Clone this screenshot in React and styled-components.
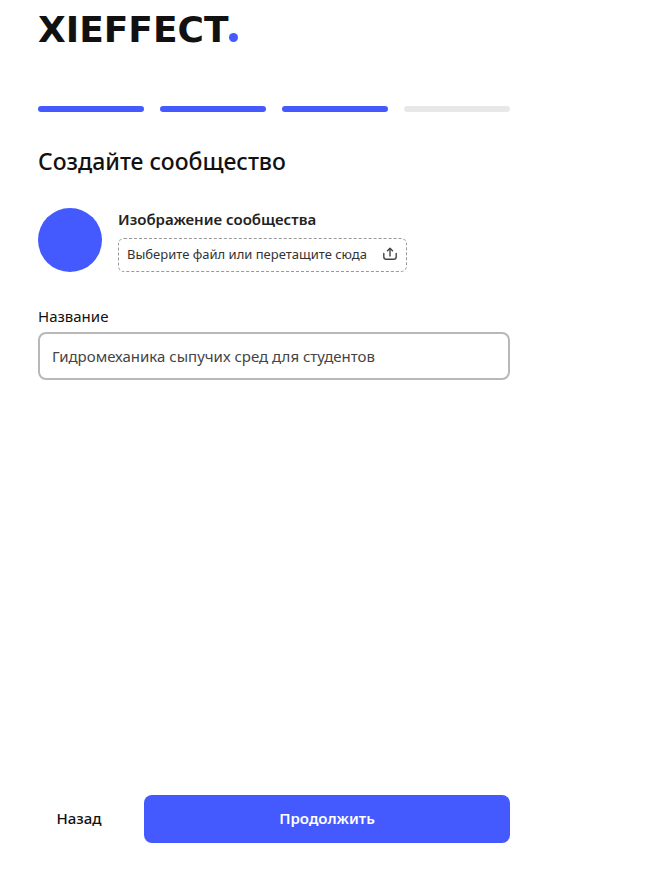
import React, { useState } from "react";
import styled, { createGlobalStyle } from "styled-components";

const GlobalStyle = createGlobalStyle`
  *, *::before, *::after { box-sizing: border-box; }
  body {
    margin: 0;
    background: #ffffff;
    color: #111111;
    font-family: "Noto Sans", "Open Sans", sans-serif;
    font-size: 15px;
    line-height: 20px;
  }
  button, input { font: inherit; color: inherit; }
`;

const Page = styled.main`
  display: flex;
  flex-direction: column;
  width: 100%;
  max-width: 548px;
  min-height: 100vh;
  padding: 14px 38px 37px;
`;

const Logo = styled.div`
  display: flex;
  align-items: baseline;
  height: 32px;
  font-family: "DejaVu Sans", sans-serif;
  font-size: 36px;
  font-weight: 700;
  line-height: 32px;
`;

const LogoDot = styled.span`
  width: 9px;
  height: 9px;
  border-radius: 50%;
  background: #445aff;
`;

const Steps = styled.div`
  display: flex;
  gap: 16px;
  margin-top: 60px;
`;

const Step = styled.span`
  flex: 1;
  height: 6px;
  border-radius: 3px;
  background: ${({ $done }) => ($done ? "#445aff" : "#e8e8e8")};
`;

const Form = styled.form`
  display: flex;
  flex: 1;
  flex-direction: column;
  margin-top: 33px;
`;

const Title = styled.h1`
  margin: 0;
  font-size: 23px;
  font-weight: 500;
  line-height: 32px;
`;

const ImageRow = styled.div`
  display: flex;
  align-items: center;
  gap: 16px;
  margin-top: 31px;
`;

const Avatar = styled.div`
  flex: none;
  width: 64px;
  height: 64px;
  border-radius: 50%;
  background: #445aff;
`;

const Upload = styled.div`
  display: flex;
  flex-direction: column;
  align-items: flex-start;
  gap: 8px;
`;

const UploadTitle = styled.span`
  color: #222222;
  font-weight: 600;
  line-height: 22px;
`;

const DropZone = styled.label`
  display: flex;
  align-items: center;
  gap: 15px;
  height: 34px;
  padding: 0 8px 2px;
  border: 1px dashed #999999;
  border-radius: 6px;
  color: #333333;
  font-size: 13px;
  cursor: pointer;
`;

const FileInput = styled.input`
  width: 0;
  height: 0;
  margin: 0 -15px 0 0;
  padding: 0;
  opacity: 0;
`;

const Field = styled.div`
  display: flex;
  flex-direction: column;
  gap: 6px;
  margin-top: 34px;
`;

const FieldLabel = styled.label`
  font-size: 15px;
`;

const TextInput = styled.input`
  width: 100%;
  height: 48px;
  padding: 0 12px;
  border: 2px solid #b8b8b8;
  border-radius: 8px;
  background: #ffffff;
  color: #444444;
`;

const Actions = styled.div`
  display: flex;
  gap: 24px;
  margin-top: auto;
`;

const Button = styled.button`
  flex: ${({ $primary }) => ($primary ? "1" : "none")};
  width: 82px;
  height: 48px;
  padding: 0 0 2px;
  border: 0;
  border-radius: 8px;
  background: ${({ $primary }) => ($primary ? "#445aff" : "transparent")};
  color: ${({ $primary }) => ($primary ? "#ffffff" : "#111111")};
  font-weight: ${({ $primary }) => ($primary ? 600 : 500)};
  cursor: pointer;
`;

const UploadIcon = () => (
  <svg width="16" height="16" viewBox="0 0 16 16" fill="none" stroke="#444444" strokeWidth="1.4" strokeLinecap="round" strokeLinejoin="round" aria-hidden="true">
    <path d="M8 10V2.5M5.5 4.7L8 2.2l2.5 2.5" />
    <path d="M1.8 7.5v3.2a2.6 2.6 0 0 0 2.6 2.6h7.2a2.6 2.6 0 0 0 2.6-2.6V7.5" />
  </svg>
);

const steps = [true, true, true, false];

export default function App() {
  const [name, setName] = useState("Гидромеханика сыпучих сред для студентов");
  return (
    <>
      <GlobalStyle />
      <Page>
        <Logo>XIEFFECT<LogoDot /></Logo>
        <Steps>
          {steps.map((done, i) => <Step key={i} $done={done} />)}
        </Steps>
        <Form onSubmit={(e) => e.preventDefault()}>
          <Title>Создайте сообщество</Title>
          <ImageRow>
            <Avatar />
            <Upload>
              <UploadTitle>Изображение сообщества</UploadTitle>
              <DropZone htmlFor="community-image">
                <FileInput id="community-image" type="file" accept="image/*" />
                <span>Выберите файл или перетащите сюда</span>
                <UploadIcon />
              </DropZone>
            </Upload>
          </ImageRow>
          <Field>
            <FieldLabel htmlFor="community-name">Название</FieldLabel>
            <TextInput id="community-name" type="text" value={name} onChange={(e) => setName(e.target.value)} />
          </Field>
          <Actions>
            <Button type="button">Назад</Button>
            <Button type="submit" $primary>Продолжить</Button>
          </Actions>
        </Form>
      </Page>
    </>
  );
}
